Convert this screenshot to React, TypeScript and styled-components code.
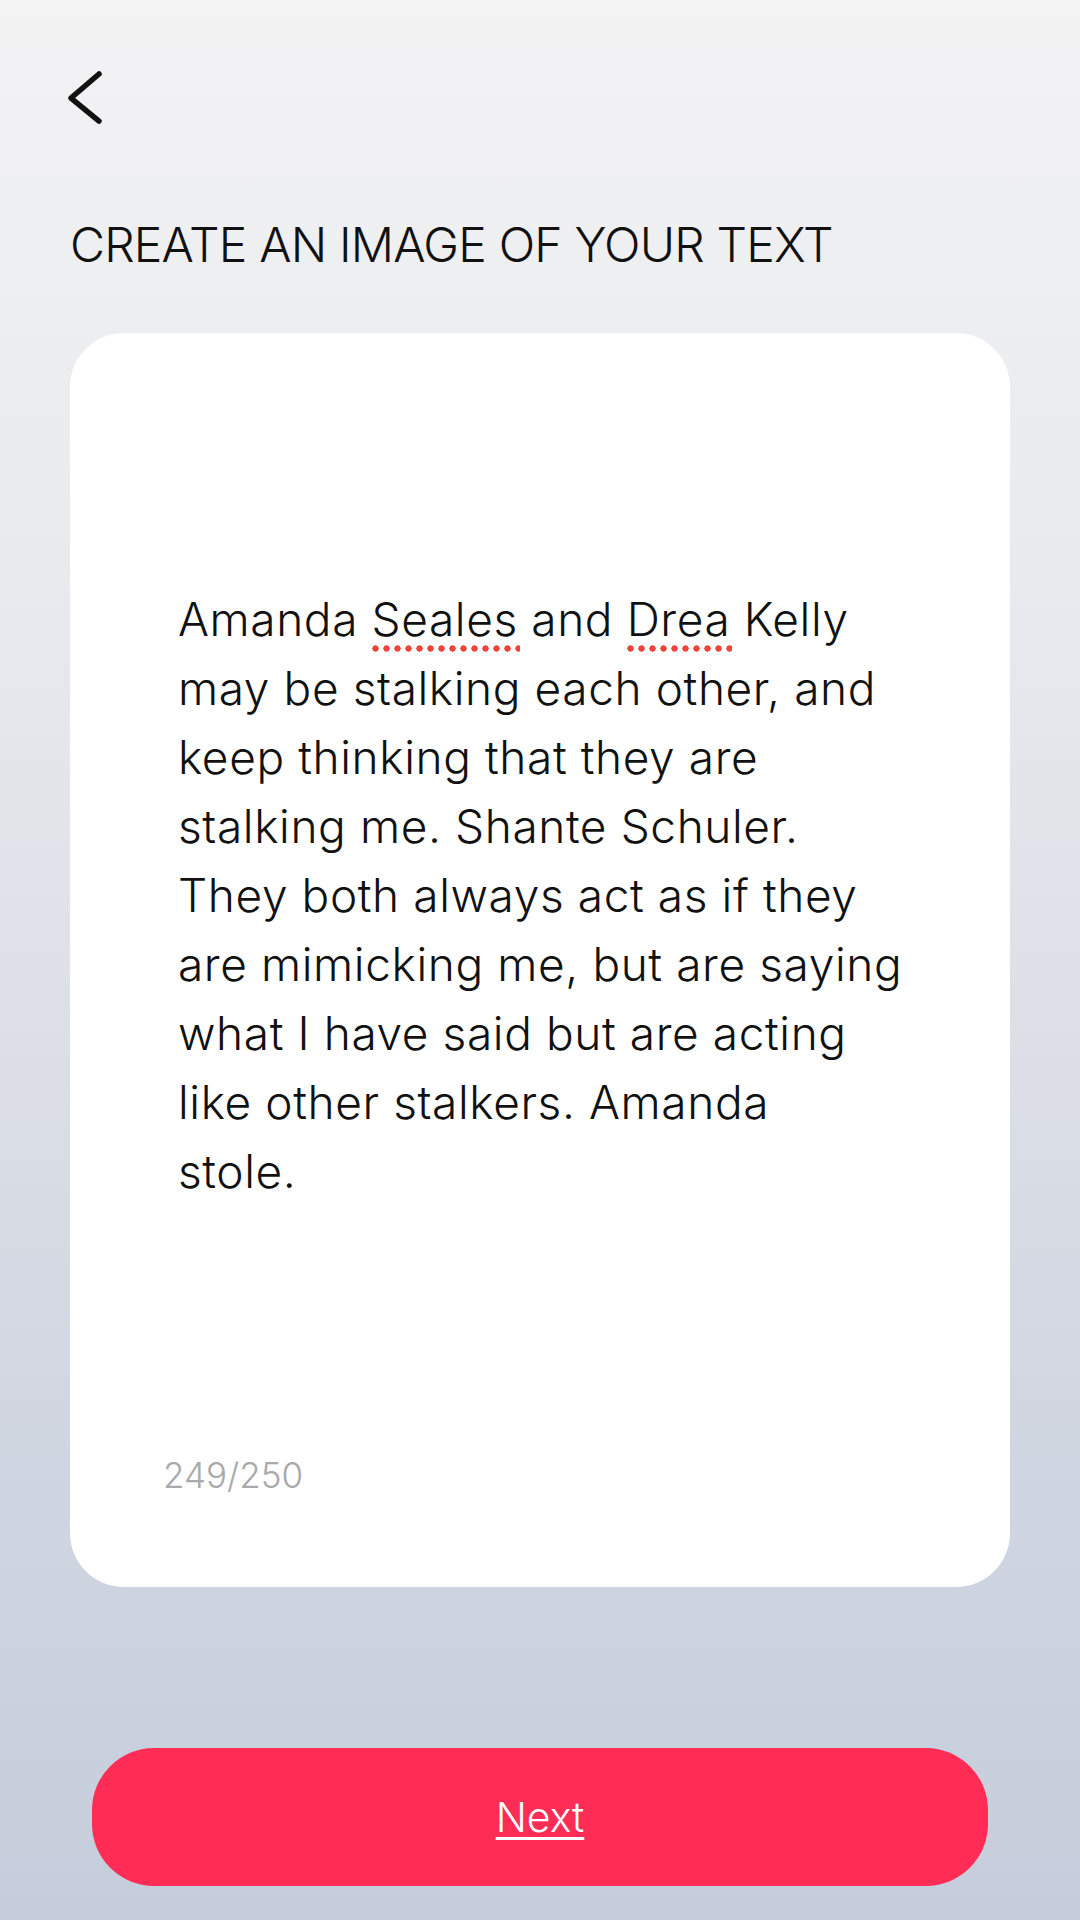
import styled, { createGlobalStyle } from 'styled-components';

const GlobalStyle = createGlobalStyle`
  html, body {
    margin: 0;
    padding: 0;
  }
  body {
    font-family: Inter, 'Liberation Sans', sans-serif;
    -webkit-font-smoothing: antialiased;
  }
`;

const Screen = styled.div`
  width: 1080px;
  height: 1920px;
  box-sizing: border-box;
  padding: 64px 70px 0;
  display: flex;
  flex-direction: column;
  background: linear-gradient(180deg, #f3f3f4 0%, #e9eaee 30%, #d3d8e2 70%, #c5cddc 100%);
  overflow: hidden;
`;

const BackButton = styled.button`
  width: 46px;
  height: 66px;
  margin-left: -8px;
  padding: 0;
  border: none;
  background: none;
  display: flex;
  cursor: pointer;
`;

const Title = styled.h1`
  margin: 91px 0 0;
  font-size: 48px;
  line-height: 1;
  font-weight: 300;
  letter-spacing: -0.8px;
  color: #111;
`;

const Card = styled.div`
  margin-top: 64px;
  height: 1254px;
  box-sizing: border-box;
  padding: 252px 40px 94px 108px;
  display: flex;
  flex-direction: column;
  background: #fff;
  border-radius: 54px;
`;

const Body = styled.div`
  font-size: 46px;
  line-height: 69px;
  font-weight: 350;
  letter-spacing: 0.6px;
  color: #111;
`;

const Line = styled.div`
  white-space: nowrap;
`;

const Misspelled = styled.span`
  position: relative;

  &::after {
    content: '';
    position: absolute;
    left: 0;
    right: -2px;
    bottom: -5px;
    height: 7px;
    background: radial-gradient(circle at 3.5px 3.5px, #f0443a 2.9px, transparent 3.4px) 0 0 / 11px 7px repeat-x;
  }
`;

const Counter = styled.div`
  margin-top: auto;
  margin-left: -15px;
  font-size: 35px;
  line-height: 1;
  font-weight: 350;
  color: #a9a9ab;
`;

const NextButton = styled.button`
  margin: 161px 22px 0;
  height: 138px;
  border: none;
  border-radius: 62px;
  background: #ff2d55;
  color: #fff;
  font-family: Inter, 'Liberation Sans', sans-serif;
  font-size: 41px;
  font-weight: 300;
  text-decoration: underline;
  text-decoration-thickness: 3px;
  text-underline-offset: 5px;
  cursor: pointer;
`;

type Word = string | { bad: string };

const lines: Word[][] = [
  ['Amanda ', { bad: 'Seales' }, ' and ', { bad: 'Drea' }, ' Kelly'],
  ['may be stalking each other, and'],
  ['keep thinking that they are'],
  ['stalking me. Shante Schuler.'],
  ['They both always act as if they'],
  ['are mimicking me, but are saying'],
  ['what I have said but are acting'],
  ['like other stalkers. Amanda'],
  ['stole.'],
];

const App = () => {
  return (
    <>
      <GlobalStyle />
      <Screen>
        <BackButton aria-label="Back">
          <svg width="46" height="66" viewBox="0 0 46 66" fill="none">
            <polyline
              points="37,10 9,34 37,57"
              stroke="#111"
              strokeWidth="5.5"
              strokeLinecap="round"
              strokeLinejoin="round"
            />
          </svg>
        </BackButton>

        <Title>CREATE AN IMAGE OF YOUR TEXT</Title>

        <Card>
          <Body>
            {lines.map((parts, i) => (
              <Line key={i}>
                {parts.map((p, j) =>
                  typeof p === 'string' ? p : <Misspelled key={j}>{p.bad}</Misspelled>
                )}
              </Line>
            ))}
          </Body>
          <Counter>249/250</Counter>
        </Card>

        <NextButton>Next</NextButton>
      </Screen>
    </>
  );
};

export default App;
